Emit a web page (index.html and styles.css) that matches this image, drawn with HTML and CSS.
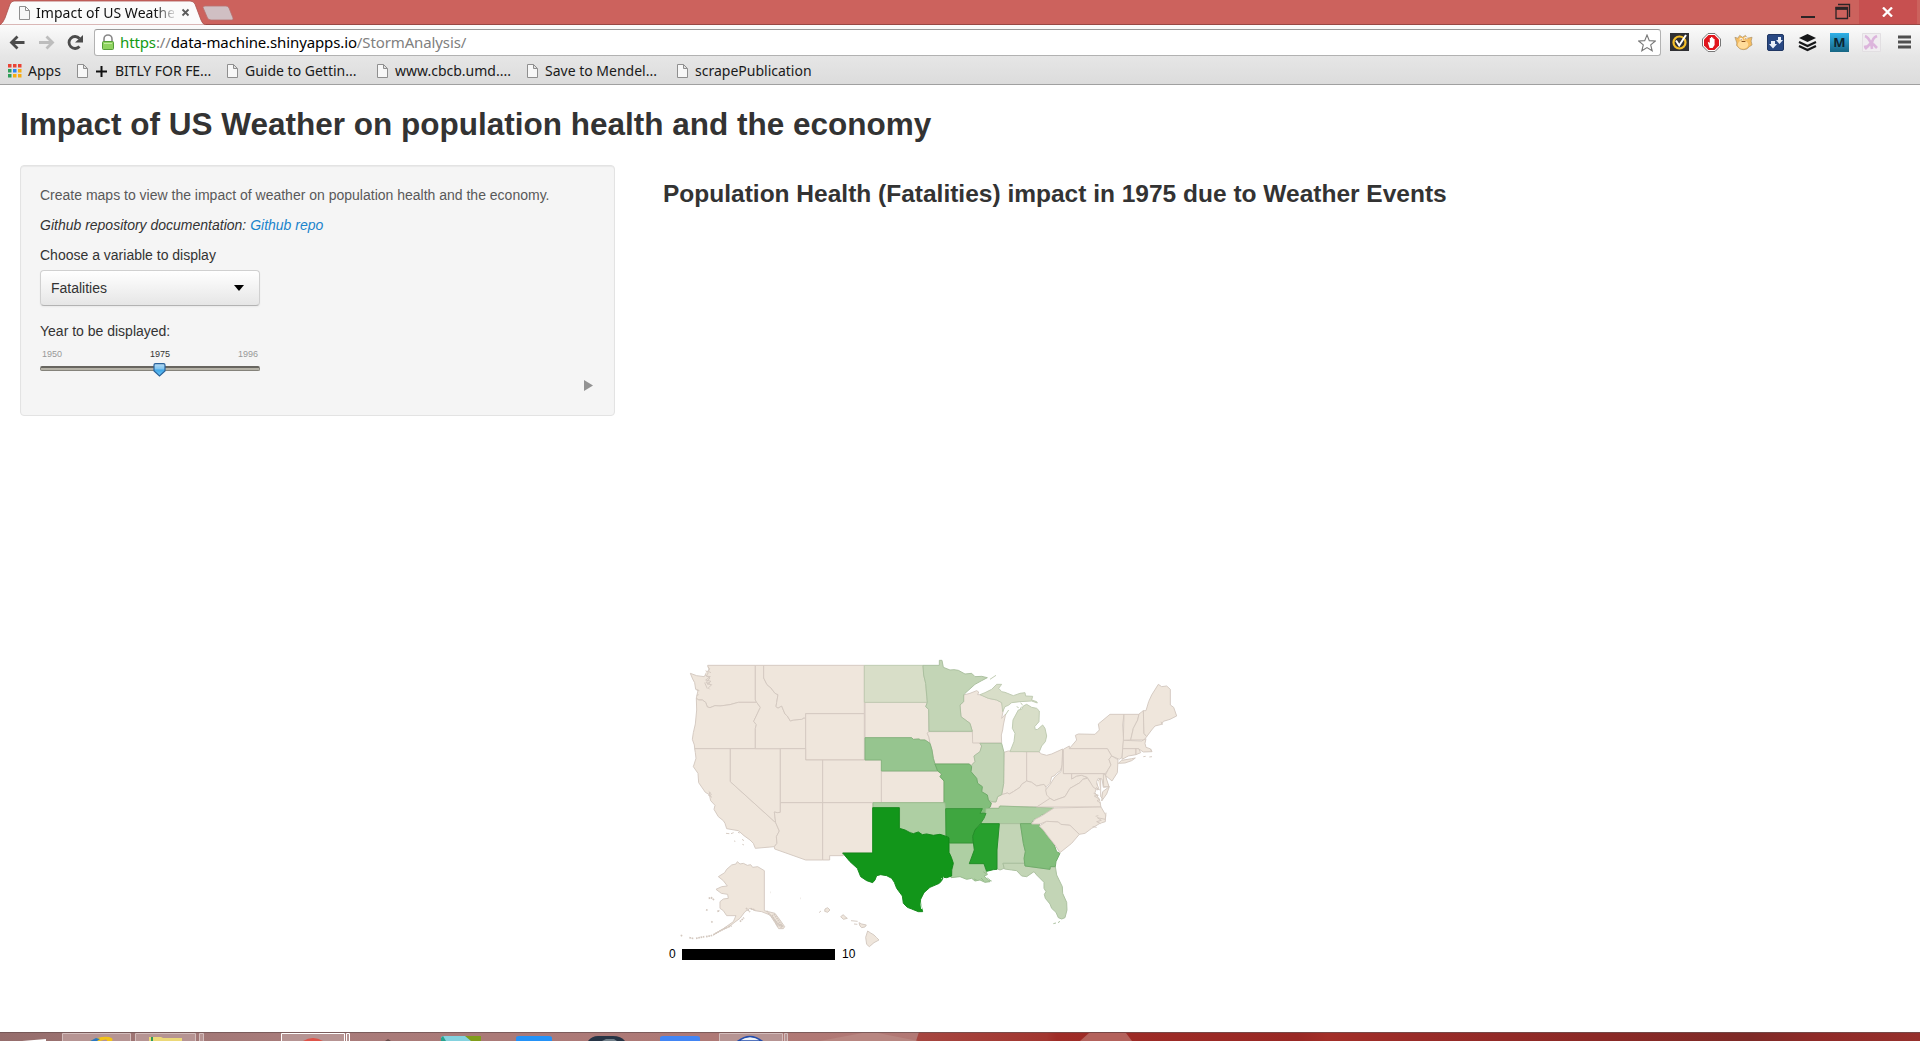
FILE: index.html
```html
<!DOCTYPE html>
<html lang="en">
<head>
<meta charset="utf-8">
<title>Impact of US Weather</title>
<link rel="stylesheet" href="styles.css">
</head>
<body>
<svg class="defs" width="0" height="0">
  <symbol id="page" viewBox="0 0 11 14"><path d="M.5.5h6l4 4v9H.5zM6.500.5v4h4" fill="#f7f7f7" stroke="#8f8f8f"/></symbol>
</svg>
<header class="browser">
  <div class="titlebar">
    <svg class="tabshape" width="240" height="25" viewBox="0 0 240 25">
      <path d="M203 7.500Q203 6 205 6H226Q228 6 229 8L233 18Q233.500 20 232 20H211Q208.500 20 207.500 18Z" fill="#d0bfc3" stroke="#b8716f" stroke-width=".8"/>
      <path d="M0 25Q3 23 5 18L10 4Q11.500 1 14 1H190Q193.500 1 195 4L201 20Q202.500 24.500 206 25Z" fill="#fbfbfb" stroke="#a9524e" stroke-width=".8"/>
    </svg>
    <div class="tab">
      <svg class="doc" width="11" height="14"><use href="#page"/></svg>
      <span class="tabname">Impact of US Weather</span>
      <svg width="9" height="9" viewBox="0 0 9 9"><path d="M1.500 1.500l6 6m0-6l-6 6" stroke="#5b5b5b" stroke-width="1.800"/></svg>
    </div>
    <div class="wincontrols">
      <svg width="60" height="24" viewBox="0 0 60 24"><path d="M2 16h14v2H2z" fill="#2b2426"/><path d="M37 7.500h11.500v11H37zM36.500 9h12M39 4.500h11.500V17" fill="none" stroke="#2b2426" stroke-width="1.300"/><path d="M36.500 7h12.500v2.500H36.500z" fill="#2b2426"/></svg>
      <div class="close"><svg width="11" height="10" viewBox="0 0 11 10"><path d="M1 .5l9 9M10 .5l-9 9" stroke="#fff" stroke-width="2.300"/></svg></div>
    </div>
  </div>
  <div class="toolbar">
    <svg class="nav" width="94" height="34" viewBox="0 25 94 34">
      <path d="M24.500 42.500H12M17.500 36.500l-6 6 6 6" fill="none" stroke="#4b4b4b" stroke-width="2.800"/>
      <path d="M39 42.500h12.500M46.500 36.500l6 6-6 6" fill="none" stroke="#bdbdbd" stroke-width="2.800"/>
      <path d="M79.500 46.500a6 6 0 1 1 0-8" fill="none" stroke="#4b4b4b" stroke-width="2.800"/><path d="M83 35v7.500h-8z" fill="#4b4b4b"/>
    </svg>
    <div class="address">
      <svg width="14" height="18" viewBox="0 0 14 18"><path d="M3 8V5a4 4 0 0 1 8 0v3" fill="none" stroke="#888" stroke-width="1.600"/><rect x="1.500" y="7.500" width="11" height="8" rx="1" fill="#8fd35f" stroke="#559d38"/><path d="M3 9.500h8" stroke="#c2eca3"/></svg>
      <span class="url"><b class="secure">https</b>://<b class="host">data-machine.shinyapps.io</b>/StormAnalysis/</span>
      <svg class="star" width="18" height="18" viewBox="0 0 18 18"><path d="M9 1l2.300 5.600 6 .4-4.600 3.900 1.500 5.900L9 13.600l-5.200 3.200 1.500-5.900L.7 7l6-.4z" fill="#fff" stroke="#777" stroke-width="1.100"/></svg>
    </div>
    <div class="extensions">
      <svg width="19" height="19" viewBox="0 0 19 19"><path d="M0 0h19v18H0z" fill="#303033"/><circle cx="9.500" cy="9.500" r="6" fill="none" stroke="#f6c02a" stroke-width="2.200"/><path d="M6 7.500l3.200 5L16 2" fill="none" stroke="#fff" stroke-width="2"/></svg>
      <svg width="19" height="19" viewBox="0 0 19 19"><path d="M6 .5h7L18.500 6v7L13 18.500H6L.5 13V6z" fill="#fff" stroke="#777"/><path d="M6.500 2h6L17 6.500v6L12.500 17h-6L2 12.500v-6z" fill="#e0161d"/><path d="M5.800 9.500l1-.5 1 1V5h1.200v3.500V4h1.200v4.500V4.700h1.200V9V6h1.200v6l-2 3h-3z" fill="#fff"/></svg>
      <svg width="19" height="19" viewBox="0 0 20 19"><path d="M3 10L1 4l3 1 2-3 3 2 3-2 2 3 5-1-1 4 1 4-3 2q-2 3-6 3T4 14Q2 13 3 10z" fill="#f5bd62" stroke="#a99067" stroke-width=".7"/><ellipse cx="9.500" cy="11.500" rx="5.500" ry="4.500" fill="#ffdc9b"/><path d="M6 5h3v2H6zM11 4h3v2h-3z" fill="#fff"/><path d="M7 6h1v1H7zM12 5h1v1h-1zM8 8h4v1H8z" fill="#8c511c"/></svg>
      <svg width="19" height="19" viewBox="0 0 19 19"><rect x="1.500" y="1.500" width="16" height="16" rx="1.500" fill="#294883" stroke="#203763"/><path d="M5 8h4v3h2l-4 4.500L3 11h2zM12 4h3v3h2l-3.500 4L10 7h2z" fill="#e9eff9"/></svg>
      <svg width="19" height="19" viewBox="0 0 19 19"><path d="M9.500 1L18 5 9.500 9 1 5z" fill="#161719"/><path d="M1 9l8.500 4L18 9M1 13l8.500 4 8.500-4" fill="none" stroke="#161719" stroke-width="2.200"/></svg>
      <div class="mbox">M</div>
      <svg width="19" height="19" viewBox="0 0 19 19"><path d="M.5.5h18v18H.5z" fill="#f0edf0" stroke="#e2dfe2"/><path d="M3 3q3 1 6 7M15 3q-5 2-5 8M3 16l6-6M11 11l4 4M9 9l1 7M7 13l-5 1" fill="none" stroke="#dcb5dc" stroke-width="2.600"/></svg>
      <svg class="menu" width="13" height="15" viewBox="0 0 13 15"><path d="M0 2h13M0 7h13M0 12h13" stroke="#4f4f4f" stroke-width="2.800"/></svg>
    </div>
  </div>
  <nav class="bookmarks">
    <a class="bm apps"><svg width="14" height="14" viewBox="0 0 14 14"><path d="M0 0h3.500v3.500H0zM5 0h3.500v3.500H5zM10 0h3.500v3.500H10z" fill="#ea4335"/><path d="M0 5h3.500v3.500H0zM0 10h3.500v3.500H0z" fill="#2f9e58"/><path d="M5 5h3.500v3.500H5z" fill="#2d83f0"/><path d="M10 5h3.500v3.500H10zM5 10h3.500v3.500H5zM10 10h3.500v3.500H10z" fill="#f7ac10"/></svg><span>Apps</span></a>
    <a class="bm bitly"><svg width="11" height="14"><use href="#page"/></svg><svg width="11" height="11" viewBox="0 0 11 11"><path d="M0 5.500h11M5.500 0v11" stroke="#111" stroke-width="2"/></svg><span>BITLY FOR FE...</span></a>
    <a class="bm guide"><svg width="11" height="14"><use href="#page"/></svg><span>Guide to Gettin...</span></a>
    <a class="bm cbcb"><svg width="11" height="14"><use href="#page"/></svg><span>www.cbcb.umd....</span></a>
    <a class="bm save"><svg width="11" height="14"><use href="#page"/></svg><span>Save to Mendel...</span></a>
    <a class="bm scrape"><svg width="11" height="14"><use href="#page"/></svg><span>scrapePublication</span></a>
  </nav>
</header>

<main class="content">
  <h1>Impact of US Weather on population health and the economy</h1>
  <div class="row">
    <form class="well">
      <p class="help">Create maps to view the impact of weather on population health and the economy.</p>
      <p class="repo">Github repository documentation: <a>Github repo</a></p>
      <label>Choose a variable to display</label>
      <div class="select"><span>Fatalities</span><svg width="10" height="6" viewBox="0 0 10 6"><path d="M0 0h10L5 6z"/></svg></div>
      <label>Year to be displayed:</label>
      <div class="scale"><span>1950</span><span class="now">1975</span><span>1996</span></div>
      <div class="track">
        <svg class="thumb" width="13" height="14" viewBox="0 0 13 14"><defs><linearGradient id="tg" x2="0" y2="1"><stop offset="0" stop-color="#b9dcf3"/><stop offset=".45" stop-color="#7cc3f0"/><stop offset=".5" stop-color="#3fa6e6"/><stop offset="1" stop-color="#6dc6f7"/></linearGradient></defs><path d="M1 2Q1 .6 2.500.6h8Q12 .6 12 2v6L6.500 13 1 8z" fill="url(#tg)" stroke="#2c639a" stroke-width="1.200"/></svg>
      </div>
      <div class="play"><svg width="9" height="11" viewBox="0 0 9 11"><path d="M0 0l9 5.500L0 11z" fill="#939393"/></svg></div>
    </form>
    <section class="plot">
      <h2>Population Health (Fatalities) impact in 1975 due to Weather Events</h2>
      <svg class="map" width="800" height="780" viewBox="663 225 800 780">
        <g transform="translate(670 650) scale(.33333)" class="s0">
          <path d="M113 46H256V150L260 157H205L180 164 150 168 135 167 120 173 112 171 107 157 97 150 85 150 79 144 84 122 77 118 74 98 68 87 61 70 80 77 103 80 110 66 117 60Z"/>
          <path d="M79 144L85 150 97 150 107 157 112 171 120 173 135 167 150 168 180 164 205 157H260L271 172 251 214 259 224 256 235V296H74L73 285 67 268 70 248 76 222 80 180Z"/>
          <path d="M74 296H181V395L317 518 328 543 319 560 321 580 313 590 256 595 250 580 240 570 222 557 205 542 170 536 165 520 160 512 145 500 132 478 135 466 122 452 118 434 106 427 86 398 84 370 70 350 78 325 76 308Z"/>
          <path d="M181 296H331V487L322 488 313 486 317 518 181 395Z"/>
          <path d="M256 46H281V84L291 104 303 114 315 130 324 134 320 158 318 170 324 174 335 168 345 192 352 198 361 213 370 210 395 208 403 203 407 208V296H256V235L259 224 251 214 271 172 260 157 256 150Z"/>
          <path d="M281 46H583V191H407V208L403 203 395 208 370 210 361 213 352 198 345 192 335 168 324 174 318 170 320 158 324 134 315 130 303 114 291 104 281 84Z"/>
          <path d="M407 191H583V330H407Z"/>
          <path d="M331 296H407V330H458V458H331Z"/>
          <path d="M458 330H635V458H458Z"/>
          <path d="M331 458H458V630H407L314 597 313 590 321 580 319 560 328 543 317 518 313 486 322 488 331 487Z"/>
          <path d="M458 458H609V609H518L520 617H479V630H458Z"/>
          <path d="M168 550l10 1M183 551l8-3M192 573l4 1M204 547l5 2M216 568l6 4M217 583l5 2M113 50l6 6-4 8 8 4M107 62l8 6-6 10 12 2-14 10 16 4-12 8 14 2-10 10 4 4M106 76l14 8-12 14 12 2M104 98l8 18M116 424l8 8-4 6 6 4M120 426l-4 12M79 118l9 4M80 136l6-2"/>
        </g>
        <g transform="translate(850 650) scale(.33333)">
          <g class="s0">
            <path d="M45 157H232L227 170 236 178V245L232 250 237 262 240 280 225 270 212 270 207 267 190 268 185 263H45Z"/>
            <path d="M94 363H263L272 368 275 378 270 380 282 393V458H94Z"/>
            <path d="M236 245H367L370 262 385 275 395 288 390 305 372 318 375 335 365 345 358 342H255L250 325 246 300 240 280 237 262 232 250Z"/>
            <path d="M341 135L360 130 380 122 386 126 383 134 392 134 415 145 440 150 455 158 460 180 455 205 467 192 460 225 458 240 454 255 455 279H368L367 244 360 220 333 200 330 165 341 155Z"/>
            <path d="M462 307L475 303 530 305V393L515 403 510 412 490 425 478 432 472 429 455 434 461 400Z"/>
            <path d="M530 305H565L575 312 590 316 605 312 638 297 637 345 631 362 620 370 612 378 605 380 600 400 588 412 582 403 560 408 545 397 530 393Z"/>
            <path d="M405 475L422 470 424 455 438 456 443 440 455 434 472 429 478 432 490 425 510 412 515 403 530 393 545 397 560 408 582 403 588 412 590 430 605 445 585 458 562 470 447 469V475Z"/>
          </g>
          <path class="s1" d="M43 46H219L221 75 227 100 230 140 232 157H43Z"/>
          <path class="s2" d="M219 46H268V31L276 31 280 52 300 60 312 59 325 61 345 72 365 70 375 80 395 79 412 83 395 92 375 103 345 130 341 135V155L330 165 333 200 360 220 367 244H237L236 178 227 170 232 157 227 100 221 75Z"/>
          <path class="s1" d="M390 134L405 128 425 118 440 103 455 103 446 115 455 125 465 127 490 137 510 130 525 128 527 138 548 139 545 150 560 155 562 159 545 153 510 155 485 158 475 166 465 170 458 185 455 158 440 150 415 145Z"/>
          <path class="s1" d="M520 168L530 163 545 172 560 175 568 183 567 215 554 230 556 239 563 238 578 225 585 235 590 258 586 275 575 288 568 305H480L492 275 495 250 487 235 489 210 505 180 515 178Z"/>
          <path class="s1" d="M420 88L432 80 438 76M500 170l6 3M510 178l5-8M512 158l6 8M466 195l10-15"/>
          <path class="s3" d="M45 263H185L190 268 207 267 212 270 225 270 240 280 246 300 250 325 255 342 263 363H94V330H45Z"/>
          <path class="s2" d="M390 280H455L462 307 461 400 455 434 443 440 438 456 424 455 415 450 412 435 395 425 397 410 383 400 380 385 363 365 365 345 375 335 372 318 390 305 395 288Z"/>
          <path class="s4" d="M255 342H358L365 350 363 365 380 385 383 400 397 410 395 425 412 435 415 450 424 460 420 472 410 477 405 488 390 490 397 476H286L282 458V393L270 380 275 372 263 363Z"/>
          <path class="s5" d="M69 458H285L287 475V558L270 553 250 556 230 552 217 554 205 546 190 551 180 546 165 540 149 535V473H69Z"/>
          <path class="s5" d="M298 579H370L373 600 358 640H402L408 663 412 674 402 678 420 695 405 697 390 690 375 693 365 685 350 688 330 680 303 683 310 640 298 607Z"/>
          <path class="s5" d="M405 490L408 475H447L450 468 612 474 600 488 575 495 565 504 552 508 543 521H392Z"/>
          <path class="s2" d="M448 521H511L520 580 526 605 523 640H459L463 655 450 660 441 656V600Z"/>
          <path class="s2" d="M459 640H523L525 648 600 658 601 650 616 650 620 675 637 710 638 730 650 757 651 780 645 803 635 807 625 803 618 787 605 775 600 762 586 745 583 733 588 725 582 715V697L560 675 552 665 530 680 515 678 500 662 485 660 463 657ZM610 821l8-2M624 818l6-4"/>
          <path class="s4" d="M511 521H568L570 532 582 542 595 560 613 585 620 605 630 610 618 635 616 650H601L600 658 525 648 522 625 526 605 520 580Z"/>
          <path class="s6" d="M287 476H397L390 490H408L402 505 392 520 375 540 368 560 370 579H298V562L288 560Z"/>
          <path class="s7" d="M392 521H448L441 600V658L430 659 410 664 402 641H358L373 600 368 560 375 540Z"/>
          <path class="s8" d="M68 473H148V535L165 540 180 548 190 551 205 546 217 554 230 552 250 556 270 553 285 558 297 563V607L304 622 310 640 305 660 305 678 290 683 280 682 275 692 268 700 240 712 222 728 212 748 213 765 218 785 205 785 185 777 172 772 160 760 157 738 140 715 133 697 125 685 110 677 92 674 80 677 75 690 68 698 50 692 32 680 22 655 0 635-22 609H68Z"/>
          <path class="hole" d="M215 750L213 764 215 777M279 682h2M274 686h2"/>
          <path class="s5" d="M380 690l-8-3M400 665l8 6M412 684l10 8M417 692l8 1M393 684l8 8"/>
        </g>
        <g transform="translate(1000 670) scale(.33333)" class="s0">
          <path d="M208 236L230 210 226 196 235 192 285 193 298 180 295 162 330 133H372L368 165 371 210 366 262 358 268 335 258 322 236Z"/>
          <path d="M355 280L365 271 395 266 406 264 395 272 375 279Z"/>
          <path d="M190 238L208 228V236H322L335 258 327 268 333 285 325 298 316 311H190Z"/>
          <path d="M335 258L354 269 352 308 336 333 316 316 325 298 333 285 327 268Z"/>
          <path d="M188 240L190 311H215V327L230 318 245 316 262 322 248 328 240 338 210 355 195 380 175 387 162 392 150 385 140 375 137 360 150 344 165 320 183 305 186 285Z"/>
          <path d="M110 411L150 385 162 392 175 387 195 380 210 355 240 338 248 328 262 325 275 340 290 352 285 368 298 388 303 411Z"/>
          <path d="M215 311H316L320 335 327 350 310 352 306 327 295 325 290 335 294 360 280 352 262 322 245 316 230 318 215 327Z"/>
          <path d="M310 311L316 316 327 350 311 350ZM308 365L328 350 320 372 305 393ZM294 332L302 326 302 380 308 386M290 340l8 20-10-8M281 370l14 6-12 2 16 10-8 4 12 8"/>
          <path d="M162 414L303 411 317 435 316 455 300 460 275 475 255 490 238 493 210 466 182 463 175 456 140 454 120 462H95L105 448 125 438 140 428Z"/>
          <path d="M118 468L140 454 175 456 182 463 210 466 238 493 215 520 180 548 165 525 145 500 130 480Z"/>
          <path d="M372 133H417L413 150 400 175 392 210 370 211Z"/>
          <path d="M417 132L430 122 432 190 440 200 432 210 392 210 400 175 413 150Z"/>
          <path d="M430 122L438 122 446 95 455 75 475 43 485 50 500 48 511 58V105L521 112 530 138 510 148 490 154 485 163 465 168 455 180 440 200 432 190Z"/>
          <path d="M370 211L425 213 438 206 435 220 438 232 450 236 456 245 430 246 415 236H368Z"/>
          <path d="M368 236H408V254L385 258 366 268Z"/>
          <path d="M408 236L416 236 422 248 408 254ZM430 260l7-1M448 261l8-1M452 236l3 8M318 428l-2 20-24-5 12 8-14 4 12 6M483 155l4 10M295 437l-8 2M278 470l12 2"/>
        </g>
        <g transform="translate(660 840) scale(.33333)" class="s0">
          <path d="M194 98L200 88 215 75 228 72 232 65 240 72 250 70 262 76 272 74 278 82 293 80 313 92V212L325 215 345 220 360 240 374 260 370 266 356 266 345 248 330 225 305 215 285 212 270 205 255 215 240 235 225 246 205 262 180 272 160 285 190 266 220 245 228 227 200 227 190 212 180 205V185L190 177 205 175 203 163 184 160 168 148 185 140 202 138 190 122 175 110Z"/>
          <path class="islands" d="M146 175l8-2 4 4 5 3M138 209l6 2M172 214l8-2M154 244l4 4M62 286l6 2M88 293l14 3M108 295l25-5M138 290l20-4M160 284l40-22M205 260l10-2M240 245l12-12M258 204l12 12M272 206l14 4M320 213l45 50M342 222l26 38M336 225l18 35M350 250l20 10M331 157h1M421 175h1"/>
          <path d="M495 207L503 203 510 210 503 217 494 214ZM477 218l6-5M542 230L550 224 554 229 562 235 550 238ZM573 242l20 2M582 252l10 1M597 248L605 252 619 255 615 261 605 263 600 258ZM623 273L632 279 642 285 650 293 657 300 642 308 628 320 620 313 617 292Z"/>
        </g>
        <text x="669" y="958">0</text>
        <path d="M682 949h153v11H682z"/>
        <text x="842" y="958">10</text>
      </svg>
    </section>
  </div>
</main>

<footer class="taskbar">
  <svg width="1920" height="9" viewBox="0 0 1920 9" preserveAspectRatio="none">
    <defs>
      <linearGradient id="left"><stop offset="0" stop-color="#956d6c"/><stop offset=".3" stop-color="#a77b7a"/><stop offset="1" stop-color="#b27874"/></linearGradient>
      <linearGradient id="red"><stop offset="0" stop-color="#a64640"/><stop offset=".13" stop-color="#a23630"/><stop offset=".14" stop-color="#9f2c27"/><stop offset=".38" stop-color="#992824"/><stop offset=".41" stop-color="#a32e28"/><stop offset=".5" stop-color="#992b28"/><stop offset=".68" stop-color="#8b2926"/><stop offset=".83" stop-color="#7e2a27"/><stop offset=".9" stop-color="#902a28"/><stop offset="1" stop-color="#96302c"/></linearGradient>
    </defs>
    <path d="M0 0h922v9H0z" fill="url(#left)"/><path d="M919 0h1001v9H916z" fill="url(#red)"/>
    <path d="M820 9L862 1h16l40 8z" fill="#b88681"/><path d="M1080 9l9-8h37l6 8z" fill="#b4625c"/>
    <g fill="#b69493" stroke="#d3bdbc"><path d="M62.500 10V1.500h68V10M135.500 10V1.500h60V10M199.500 10V1.500h4V10M719.500 10V1.500h63V10M784.500 10V1.500h3V10"/><path d="M281.500 10V1.500h63V10M346.500 10V1.500h3V10" stroke="#fff"/></g>
    <path d="M22 9l24-2v2z" fill="#fff"/><path d="M90 9q10-5 19-4 5 1 3 4h-5q1-3-7 0z" fill="#f2c21a"/><path d="M90 9l6-3 4 1-3 2z" fill="#2a78c4"/>
    <path d="M149 5h12l2 1h19v3h-33z" fill="#ecd878"/><path d="M151 5h2v4h-2z" fill="#2d9b59"/>
    <path d="M303 9q10-6 20 0z" fill="#de5349"/><path d="M385 9l3-2 3 2z" fill="#694c4b"/>
    <path d="M441 9V6q0-2 3-2h22l6 5z" fill="#84d2df"/><path d="M465 4h16v5h-10z" fill="#819d1b"/><path d="M441 9V6l2-2 3 5z" fill="#27a28d"/>
    <path d="M516 9V6q0-2 3-2h30q3 0 3 2v3z" fill="#2492f7"/><path d="M588 9q4-5 10-5h15q8 0 12 5z" fill="#273445"/><path d="M602 9l4-2h8l3 2z" fill="#73818b"/>
    <path d="M660 9V6q0-2 3-2h34q3 0 3 2v3z" fill="#4285f4"/><path d="M738 9q12-9 24 0z" fill="#eef3fa" stroke="#234cab" stroke-width="1.500"/>
    <path d="M0 .5h1920" stroke="#6b5252" stroke-opacity=".75"/>
  </svg>
</footer>
</body>
</html>
```
FILE: styles.css
```css
* { box-sizing: border-box; }
body {
  margin: 0;
  width: 1920px;
  height: 1041px;
  overflow: hidden;
  display: flex;
  flex-direction: column;
  background: #fff;
  color: #333;
  font-family: "Liberation Sans", Arial, sans-serif;
}
svg { display: block; flex: none; }
.defs { position: absolute; }

/* Browser window */
.browser {
  height: 85px;
  flex: none;
  font-family: "Noto Sans", "Open Sans", sans-serif;
  color: #1a1a1a;
  background: linear-gradient(#fbfbfb 25px, #e6e6e6 56px, #dcdcdc 84px);
  border-bottom: 1px solid #a0a0a0;
}
.titlebar {
  position: relative;
  height: 25px;
  display: flex;
  justify-content: space-between;
  background: #cc625d;
  border-bottom: 1px solid #984743;
}
.tabshape { position: absolute; left: 0; top: 0; }
.tab {
  position: relative;
  display: flex;
  align-items: center;
  padding-left: 19px;
  height: 25px;
}
.tabname {
  width: 138px;
  margin: 0 7px 0 6px;
  overflow: hidden;
  white-space: nowrap;
  font-size: 14px;
  letter-spacing: 0.05px;
  color: #111;
  -webkit-mask-image: linear-gradient(90deg, #000 118px, transparent 142px);
  mask-image: linear-gradient(90deg, #000 118px, transparent 142px);
}
.wincontrols { display: flex; }
.close {
  width: 58px;
  height: 24px;
  margin-right: 3px;
  padding: 7px 0 0 23px;
  background: #c75050;
}
.toolbar { display: flex; height: 34px; }
.address {
  display: flex;
  align-items: center;
  width: 1567px;
  height: 27px;
  margin-top: 4px;
  padding: 0 4px 0 6px;
  background: #fff;
  border: 1px solid #b2b2b2;
  border-top-color: #999;
  border-radius: 3px;
}
.url {
  margin-left: 5px;
  padding-bottom: 2px;
  font-size: 15px;
  letter-spacing: -0.12px;
  color: #808080;
  white-space: nowrap;
}
.url b { font-weight: normal; }
.url .secure { color: #149a14; }
.url .host { color: #000; }
.star { margin-left: auto; }
.extensions {
  display: flex;
  align-items: center;
  gap: 13px;
  margin-left: 9px;
}
.menu { margin-left: 4px; }
.mbox {
  width: 19px;
  height: 19px;
  background: linear-gradient(#2fb0e8, #176684);
  color: #0d2531;
  font: bold 13px/18px "Open Sans", sans-serif;
  text-align: center;
}
.bookmarks { display: flex; height: 24px; }
.bm {
  display: flex;
  align-items: center;
  gap: 7px;
  height: 24px;
  font-size: 14px;
  white-space: nowrap;
}
.bm span { padding-bottom: 2px; }
.apps { gap: 6px; width: 69px; margin-left: 8px; }
.bitly, .guide, .cbcb, .save { width: 150px; }
.bitly { gap: 8px; }
.bitly span { letter-spacing: -0.05px; }

/* App page */
.content { flex: 1; padding: 19px 20px; min-height: 0; }
h1 {
  margin: 0;
  font-size: 31.5px;
  line-height: 40px;
  white-space: nowrap;
}
.row { display: flex; gap: 48px; margin-top: 21px; }
.well {
  width: 595px;
  height: 251px;
  padding: 19px;
  background: #f5f5f5;
  border: 1px solid #e3e3e3;
  border-radius: 4px;
  box-shadow: inset 0 1px 1px rgba(0, 0, 0, .05);
  font-size: 14px;
  line-height: 20px;
}
.well p { margin: 0 0 10px; }
.help { color: #595959; }
.repo { font-style: italic; }
.repo a { color: #1a84cc; }
.well label { display: block; margin-bottom: 5px; }
.select {
  display: flex;
  justify-content: space-between;
  align-items: center;
  width: 220px;
  height: 36px;
  margin-bottom: 15px;
  padding: 0 15px 0 10px;
  border: 1px solid #d0d0d0;
  border-bottom-color: #b3b3b3;
  border-radius: 4px;
  background: linear-gradient(#fff, #e6e6e6);
  box-shadow: 0 1px 2px rgba(0, 0, 0, .05);
}
.scale {
  display: flex;
  justify-content: space-between;
  width: 220px;
  margin-top: 7px;
  padding: 0 2px;
  font-size: 9px;
  line-height: 13px;
  color: #999;
}
.scale .now { position: relative; left: 10px; color: #333; }
.track {
  position: relative;
  width: 220px;
  height: 5px;
  margin-top: 5px;
  background: #b5b2a7;
  border: 1px solid #85837b;
  border-top: 2px solid #67655f;
  border-radius: 2px;
}
.thumb { position: absolute; left: 112px; top: -5px; }
.play { display: flex; justify-content: flex-end; padding: 9px 2px 0 0; }
.plot h2 {
  margin: 9px 0 0;
  font-size: 24.5px;
  line-height: 40px;
  white-space: nowrap;
}

/* Choropleth */
.map { margin-top: 11px; }
.map text { font: 12px "Liberation Sans", Arial, sans-serif; fill: #000; }
.map g path { stroke-width: 2.8; stroke-linejoin: round; }
.s0 { fill: #efe6dc; stroke: #d3c8bf; }
.s1 { fill: #d8dec8; stroke: #bdc9af; }
.s2 { fill: #c3d5b6; stroke: #a9be9d; }
.s3 { fill: #96c58f; stroke: #83b27c; }
.s4 { fill: #82be7b; stroke: #6daa67; }
.s5 { fill: #aecfa3; stroke: #96b98b; }
.s6 { fill: #3fa640; stroke: #359436; }
.s7 { fill: #27a02d; stroke: #208c26; }
.s8 { fill: #12961a; stroke: #108717; }
.hole { fill: none; stroke: #fff; }
.map g .islands { fill: none; stroke-width: 5; stroke-dasharray: 5 2; }
.taskbar { flex: none; height: 9px; }
```
